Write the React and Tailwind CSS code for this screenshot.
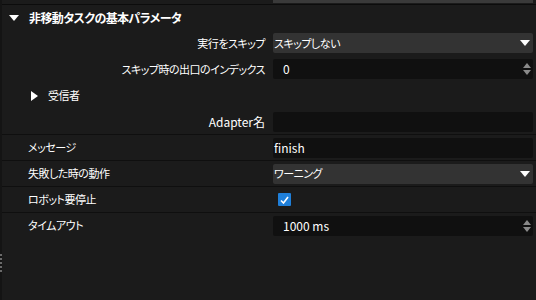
import React from 'react';

const FONT = { fontFamily: '"Noto Sans CJK JP", "Noto Sans", sans-serif' };
const JP = 'text-[11px] tracking-[-0.5px]';

const Caret = () => (
  <svg width="10" height="6" viewBox="0 0 10 6" className="shrink-0">
    <path d="M0 0 H10 L5 6 Z" fill="#ffffff" />
  </svg>
);

const Spinner = () => (
  <svg width="8" height="14" viewBox="0 0 8 14" className="shrink-0">
    <path d="M0 6 L4 1 L8 6 Z" fill="#8a8a8a" />
    <path d="M0 8 L8 8 L4 13 Z" fill="#8a8a8a" />
  </svg>
);

const Select = ({ value }) => (
  <div className="h-[20px] flex-1 flex items-center justify-between bg-[#333333] rounded-[2px] pl-[1px] pr-[3px] text-white">
    <span className={JP}>{value}</span>
    <Caret />
  </div>
);

const NumberInput = ({ value }) => (
  <div className="h-[20px] flex-1 flex items-center justify-between bg-[#101010] rounded-[2px] pl-[10px] pr-[2px] text-[12px] text-white">
    <span>{value}</span>
    <Spinner />
  </div>
);

const TextInput = ({ value }) => (
  <div className="h-[20px] flex-1 flex items-center bg-[#101010] rounded-[2px] pl-[1px] text-[12px] text-white">
    <span>{value}</span>
  </div>
);

// 右寄せラベルの行
const RightRow = ({ label, h = 'h-[26px]', text = JP, children }) => (
  <div className={`${h} flex items-center`}>
    <div className={`w-[263px] text-right text-white ${text}`}>{label}</div>
    <div className="flex-1 flex items-center pl-[8px] pr-[3px]">{children}</div>
  </div>
);

// 左寄せラベルの行（区切り線あり）
const LeftRow = ({ label, children }) => (
  <div className="h-[26px] flex items-center border-t border-[#0f0f0f]">
    <div className={`w-[263px] text-white pl-[26px] ${JP}`}>{label}</div>
    <div className="flex-1 flex items-center pl-[8px] pr-[3px]">{children}</div>
  </div>
);

export default function App() {
  return (
    <div className="w-[536px] h-[300px] bg-[#1b1b1b] overflow-hidden flex [font-feature-settings:'palt']" style={FONT}>
      {/* 左端のストリップ */}
      <div className="w-[2px] bg-[#141414] flex flex-col justify-end pb-[28px] gap-[2px]">
        {[0, 1, 2, 3, 4].map((i) => (
          <div key={i} className="h-[2px] w-[2px] bg-[#6a6a6a]" />
        ))}
      </div>

      <div className="flex-1 flex flex-col">
        {/* 上の入力欄の名残 */}
        <div className="h-[5px] flex border-b border-[#0c0c0c]">
          <div className="w-[271px]" />
          <div className="w-[260px] h-[3px] bg-[#3a3a3a]" />
        </div>

        {/* セクション見出し */}
        <div className="h-[25px] flex items-center pl-[7px] gap-[10px]">
          <Caret />
          <span className="text-[12px] tracking-[-0.6px] font-bold text-white">非移動タスクの基本パラメータ</span>
        </div>

        <RightRow label="実行をスキップ">
          <Select value="スキップしない" />
        </RightRow>
        <RightRow label="スキップ時の出口のインデックス">
          <NumberInput value="0" />
        </RightRow>

        <div className="h-[27px] flex items-center pl-[29px] gap-[10px]">
          <svg width="7" height="10" viewBox="0 0 7 10">
            <path d="M0 0 L7 5 L0 10 Z" fill="#ffffff" />
          </svg>
          <span className={`text-white ${JP}`}>受信者</span>
        </div>

        <RightRow label="Adapter名" h="h-[25px]" text="text-[12px]">
          <TextInput value="" />
        </RightRow>

        <LeftRow label="メッセージ">
          <TextInput value="finish" />
        </LeftRow>
        <LeftRow label="失敗した時の動作">
          <Select value="ワーニング" />
        </LeftRow>
        <LeftRow label="ロボット要停止">
          <div className="ml-[5px] w-[13px] h-[13px] bg-[#1f7fd9] rounded-[1px] flex items-center justify-center">
            <svg width="9" height="8" viewBox="0 0 9 8">
              <path d="M1 4.5 L3.5 7 L8 1" stroke="#ffffff" strokeWidth="1.6" fill="none" />
            </svg>
          </div>
        </LeftRow>
        <LeftRow label="タイムアウト">
          <NumberInput value="1000 ms" />
        </LeftRow>
      </div>
    </div>
  );
}
